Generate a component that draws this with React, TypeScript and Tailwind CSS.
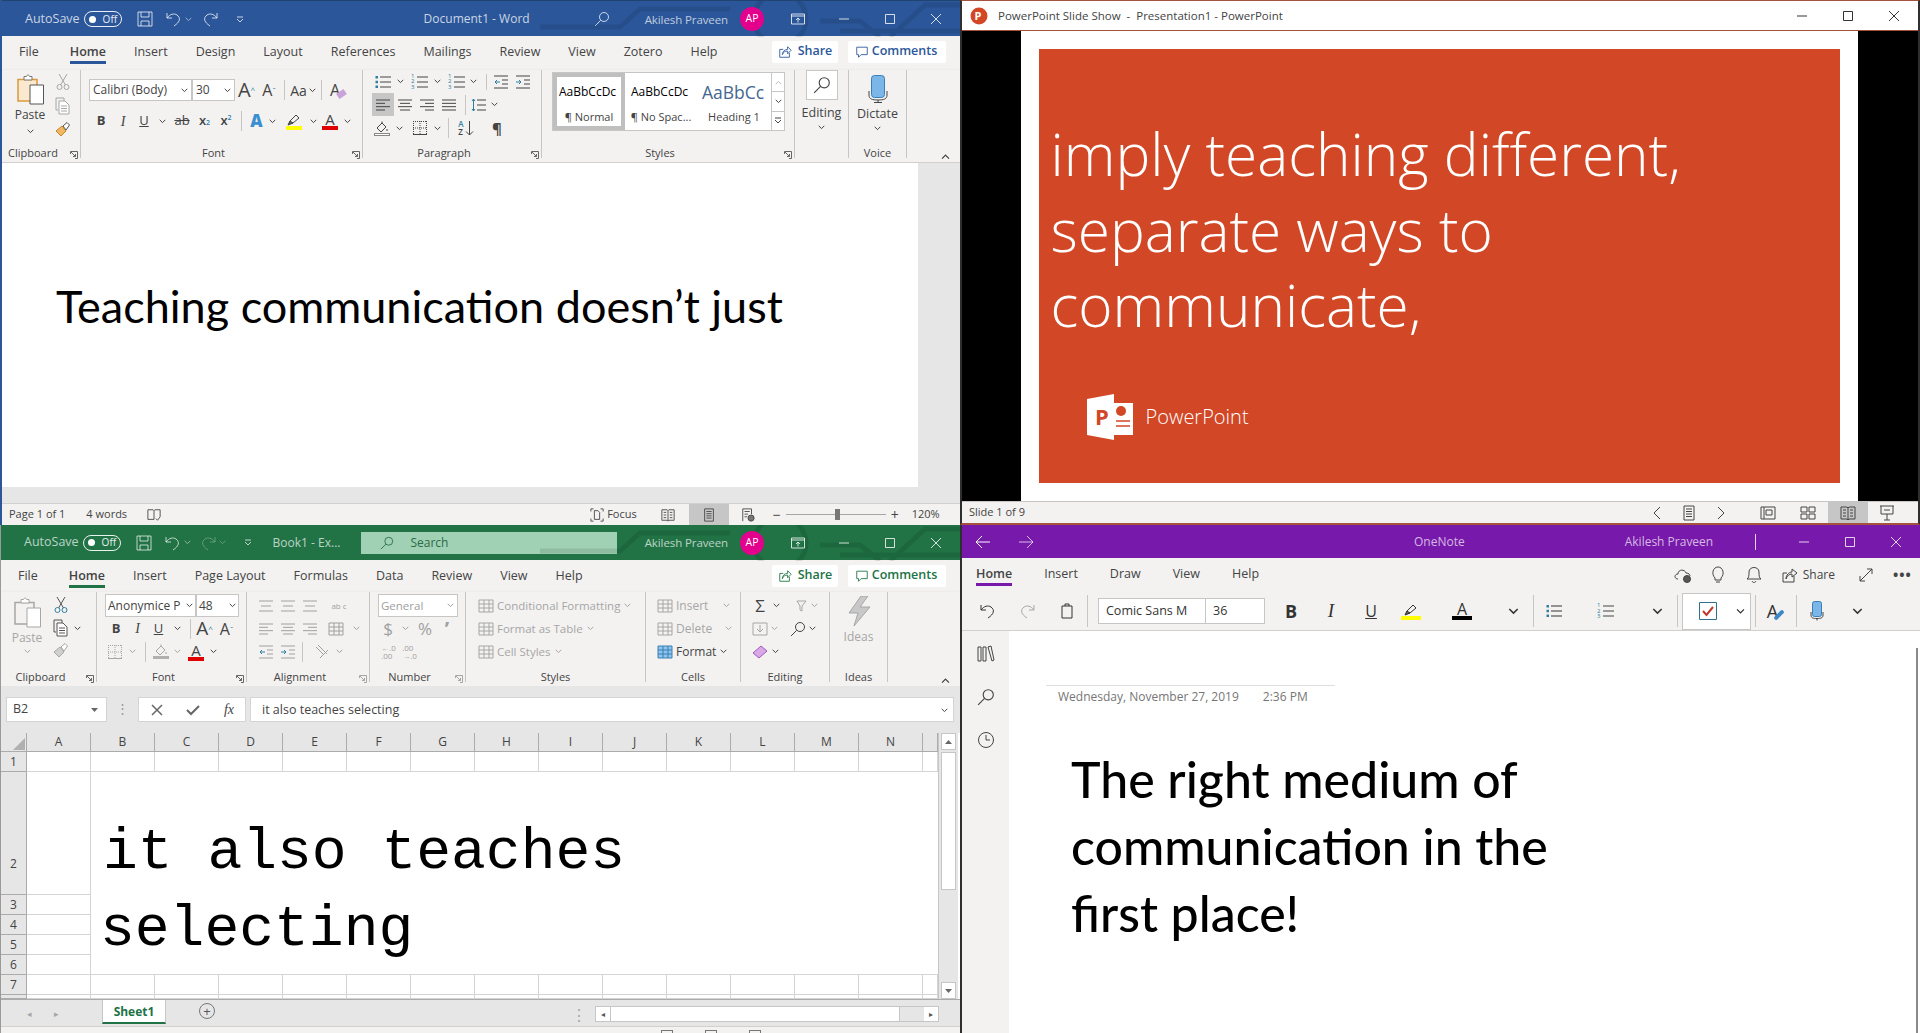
import type { ReactNode } from "react";

const ribbonText = "text-[#444444]";

function Ic({ w = 16, h = 16, vb = "0 0 16 16", c = "", children }: { w?: number; h?: number; vb?: string; c?: string; children: ReactNode }) {
  return (
    <svg width={w} height={h} viewBox={vb} fill="none" stroke="currentColor" strokeWidth="1" className={`shrink-0 ${c}`}>
      {children}
    </svg>
  );
}

function Chev({ c = "" }: { c?: string }) {
  return (
    <Ic w={7} h={5} vb="0 0 7 5" c={c}>
      <path d="M0.7 0.8 3.5 3.6 6.3 0.8" />
    </Ic>
  );
}

function Slot({ c, children }: { c: string; children?: ReactNode }) {
  return <div className={`flex shrink-0 items-center justify-center ${c}`}>{children}</div>;
}

function VSep({ c = "h-[20px]" }: { c?: string }) {
  return <div className={`w-px shrink-0 bg-[#c8c6c4] ${c}`} />;
}

function Lines({ rows, c = "" }: { rows: [number, number][]; c?: string }) {
  return (
    <Ic c={c}>
      {rows.map(([a, b], i) => (
        <path key={i} d={`M${a} ${3 + i * (10 / (rows.length - 1))}H${b}`} />
      ))}
    </Ic>
  );
}

const alignLeft: [number, number][] = [[1, 15], [1, 10], [1, 15], [1, 10]];
const alignCenter: [number, number][] = [[1, 15], [3, 13], [1, 15], [3, 13]];
const alignRight: [number, number][] = [[1, 15], [6, 15], [1, 15], [6, 15]];
const alignFull: [number, number][] = [[1, 15], [1, 15], [1, 15], [1, 15]];

function Bullets({ c = "" }: { c?: string }) {
  return (
    <Ic w={18} h={16} vb="0 0 18 16" c={c}>
      <path d="M6 3H17M6 8H17M6 13H17" />
      <path d="M1.5 2h2.5v2.5h-2.5zM1.5 6.8h2.5v2.5h-2.5zM1.5 11.6h2.5v2.5h-2.5z" fill="#2f7f9f" stroke="none" />
    </Ic>
  );
}

function Numbers({ c = "" }: { c?: string }) {
  return (
    <div className={`relative flex h-[16px] w-[18px] flex-col text-[6px] leading-[5.5px] text-[#2f7f9f] ${c}`}>
      <span>1</span>
      <span>2</span>
      <span>3</span>
      <svg width="18" height="16" viewBox="0 0 18 16" stroke="#444" className="absolute left-0 top-0" fill="none">
        <path d="M6 3H17M6 8H17M6 13H17" />
      </svg>
    </div>
  );
}

function Indent({ out }: { out?: boolean }) {
  return (
    <Ic>
      <path d="M1 2H15M9 6H15M9 10H15M1 14H15" />
      <path d={out ? "M7 8H2M4 6 2 8 4 10" : "M1 8H6M4 6 6 8 4 10"} stroke="#2f7f9f" />
    </Ic>
  );
}

function Paste({ off }: { off?: boolean }) {
  return (
    <svg width="29" height="33" viewBox="0 0 29 33" fill="none" className="shrink-0">
      <path d="M2 5.5H21V27H2Z" fill={off ? "#f3f2f1" : "#fbe9cf"} stroke={off ? "#a6a6a6" : "#d99a3c"} strokeWidth="1.5" />
      <path d="M8 6V2.5H10.5C11 0.5 13 0.5 13.5 2.5H16V6Z" fill="#fff" stroke={off ? "#a6a6a6" : "#777"} />
      <path d="M14 11H27.5V30H14Z" fill="#fff" stroke={off ? "#a6a6a6" : "#555"} />
    </svg>
  );
}

function Cut({ off, blue }: { off?: boolean; blue?: boolean }) {
  return (
    <Ic vb="0 0 16 18" h={18} c={off ? "text-[#a6a6a6]" : "text-[#555]"}>
      <path d="M4 1 10.5 12M12 1 5.5 12" />
      <circle cx="4.5" cy="14" r="2.5" stroke={blue ? "#2f7f9f" : "currentColor"} />
      <circle cx="11.5" cy="14" r="2.5" stroke={blue ? "#2f7f9f" : "currentColor"} />
    </Ic>
  );
}

function Copy({ off }: { off?: boolean }) {
  return (
    <Ic vb="0 0 16 18" h={18} c={off ? "text-[#a6a6a6]" : "text-[#555]"}>
      <path d="M3 13H1V1H9V4" />
      <path d="M4 4H10L14 8V17H4ZM6 9H12M6 11.5H12M6 14H12" fill="#fff" />
    </Ic>
  );
}

function Painter({ off }: { off?: boolean }) {
  return (
    <Ic vb="0 0 16 16" c={off ? "text-[#a6a6a6]" : "text-[#555]"}>
      <path d="M1 10 7 5 11 10 6 15Z" fill={off ? "#d0d0d0" : "#f3b661"} stroke={off ? "#a6a6a6" : "#c5852b"} />
      <path d="M8 5 12 1.5 14.5 4 11 9Z" fill="#fff" />
    </Ic>
  );
}

function ColorA({ bar, size = "text-[15px]", w = "w-[16px]" }: { bar: string; size?: string; w?: string }) {
  return (
    <div className={`flex flex-col items-center leading-[14px] ${size} ${w}`}>
      <span>A</span>
      <div className={`h-[4px] w-full ${bar}`} />
    </div>
  );
}

function Highlighter({ w = "w-[16px]" }: { w?: string }) {
  return (
    <div className={`flex flex-col items-center ${w}`}>
      <Ic w={14} h={13} vb="0 0 14 13">
        <path d="M2 11 3 8 9 2 12 5 6 10Z" />
        <path d="M1 12 3 8 6 10Z" fill="#666" />
      </Ic>
      <div className="h-[4px] w-full bg-[#ffff00]" />
    </div>
  );
}

function Borders({ off }: { off?: boolean }) {
  return (
    <Ic c={off ? "text-[#a6a6a6]" : "text-[#444]"}>
      <path d="M1 1.5H15M1 14.5H15M1.5 1V15M14.5 1V15M1 8H15M8 1V15" strokeDasharray="1 1" />
      <path d="M1 14.5H15" />
    </Ic>
  );
}

function Fill({ bar, off }: { bar: string; off?: boolean }) {
  return (
    <div className="flex w-[16px] flex-col items-center">
      <Ic w={14} h={12} vb="0 0 14 12" c={off ? "text-[#a6a6a6]" : "text-[#444]"}>
        <path d="M2 7 7 2 11 6 6 11Z" />
        <path d="M7 2V0.5M12 8V10" />
      </Ic>
      <div className={`h-[3px] w-full ${bar}`} />
    </div>
  );
}

function Launcher({ off }: { off?: boolean }) {
  return (
    <div className={`absolute bottom-[-1px] right-[2px] ${off ? "text-[#a6a6a6]" : "text-[#666]"}`}>
      <Ic w={8} h={8} vb="0 0 8 8">
        <path d="M0.5 3V0.5H7.5V7.5H5M1 1 5.5 5.5M3 5.5H5.5V3" />
      </Ic>
    </div>
  );
}

function Group({ label, w, launcher, off, children }: { label?: string; w: string; launcher?: boolean; off?: boolean; children: ReactNode }) {
  return (
    <div className={`relative flex h-full shrink-0 flex-col border-r border-[#c8c6c4] ${w}`}>
      <div className="min-h-0 flex-1">{children}</div>
      <div className={`h-[10px] text-center text-[11px] leading-[10px] ${launcher ? "pr-[16px]" : ""}`}>{label}</div>
      {launcher && <Launcher off={off} />}
    </div>
  );
}

function Tabs({ items, color, active = "Home", gap = "gap-[28px]", pad = "pl-[19px]" }: { items: string[]; color: string; active?: string; gap?: string; pad?: string }) {
  return (
    <div className={`flex ${gap} ${pad}`}>
      {items.map((t) => (
        <div key={t} className={`flex flex-col pt-[8px] ${t === active ? "font-semibold" : ""} ${t === "File" ? "mr-[3px]" : ""}`}>
          <span className="text-[12.5px] leading-[16px] text-[#444]">{t}</span>
          {t === active && <div className={`mt-[1px] h-[3px] ${color}`} />}
        </div>
      ))}
    </div>
  );
}

function ShareButtons({ color, pb }: { color: string; pb: string }) {
  return (
    <div className={`ml-auto flex items-center gap-[10px] pr-[14px] text-[12.5px] font-semibold ${pb} ${color}`}>
      <div className="flex h-[22px] w-[66px] items-center justify-center gap-[6px] rounded-[2px] bg-white">
        <Ic w={14} h={14} vb="0 0 16 16">
          <path d="M13 9V14H2V5H6M5 11C5 7 8 5 11 5V2L15 6 11 10V7C8 7 6 8 5 11Z" />
        </Ic>
        Share
      </div>
      <div className="flex h-[22px] w-[98px] items-center justify-center gap-[3px] rounded-[2px] bg-white pr-[2px]">
        <Ic w={14} h={14} vb="0 0 16 16">
          <path d="M2 2.5H14V11H7L4 14V11H2Z" />
        </Ic>
        Comments
      </div>
    </div>
  );
}

function WinButtons({ color = "text-white/80" }: { color?: string }) {
  return (
    <div className={`flex pr-px ${color}`}>
      <Slot c="w-[46px] h-[30px]">
        <Ic w={12} h={12} vb="0 0 12 12"><path d="M1 6H11" /></Ic>
      </Slot>
      <Slot c="w-[46px] h-[30px]">
        <Ic w={12} h={12} vb="0 0 12 12"><path d="M1.5 1.5H10.5V10.5H1.5Z" /></Ic>
      </Slot>
      <Slot c="w-[46px] h-[30px]">
        <Ic w={12} h={12} vb="0 0 12 12"><path d="M1 1 11 11M11 1 1 11" /></Ic>
      </Slot>
    </div>
  );
}

function Circuit() {
  return (
    <svg width="420" height="36" viewBox="0 0 420 36" fill="none" stroke="#000" strokeOpacity="0.1" strokeWidth="5" className="absolute right-0 top-0">
      <circle cx="240" cy="18" r="26" />
      <path d="M0 26H80L100 8H190M280 20H320L340 36M350 36 385 4H420M300 30H420" />
    </svg>
  );
}

function Toggle() {
  return (
    <div className="flex h-[16px] w-[38px] items-center rounded-full border border-white/90 pl-[4px] text-[10px] text-white/90">
      <div className="h-[7px] w-[7px] rounded-full bg-white" />
      <span className="ml-[7px]">Off</span>
    </div>
  );
}

function TitleRight() {
  return (
    <div className="ml-auto flex items-center">
      <span className="pt-px text-[11.5px] tracking-[-0.1px] text-white/70">Akilesh Praveen</span>
      <div className="ml-[12px] flex h-[24px] w-[24px] items-center justify-center rounded-full bg-[#e3008c] text-[10.5px] text-white">AP</div>
      <Slot c="ml-[11px] w-[46px] text-white/80">
        <Ic w={14} h={12} vb="0 0 14 12">
          <path d="M0.5 1H13.5V11H0.5ZM0.5 3H13.5M7 9.5V5M5 7 7 5 9 7" />
        </Ic>
      </Slot>
      <WinButtons />
    </div>
  );
}

function SaveIc() {
  return (
    <Ic>
      <path d="M1 1H15V15H1ZM4 1V6H12V1M4 15V10H12V15" />
    </Ic>
  );
}

function UndoIc({ c = "" }: { c?: string }) {
  return (
    <Ic c={c}>
      <path d="M1 2V7H6M1 7C4 3 8 2 11 4 15 7 14 11 8 15" />
    </Ic>
  );
}

function RedoIc({ c = "" }: { c?: string }) {
  return (
    <Ic c={c}>
      <path d="M15 2V7H10M15 7C12 3 8 2 5 4 1 7 2 11 8 15" />
    </Ic>
  );
}

function QuickIc() {
  return (
    <Ic w={8} h={7} vb="0 0 8 7">
      <path d="M1 1H7M1 3 4 6 7 3" />
    </Ic>
  );
}

function SearchIc({ w = 16, c = "" }: { w?: number; c?: string }) {
  return (
    <Ic w={w} h={w} c={c}>
      <circle cx="10" cy="6" r="4.5" />
      <path d="M6.7 9.3 1 15" />
    </Ic>
  );
}

function Word() {
  return (
    <div className="flex h-[525px] flex-col overflow-hidden border-l-2 border-[#2b579a]">
      <div className="relative flex h-[36px] shrink-0 items-center border-t border-[#20446f] bg-[#2b579a] pl-[23px] pt-px text-white/75">
        <Circuit />
        <span className="text-[12.5px]">AutoSave</span>
        <div className="ml-[4px]"><Toggle /></div>
        <div className="ml-[15px]"><SaveIc /></div>
        <div className="ml-[13px]"><UndoIc /></div>
        <Chev c="ml-[3px] opacity-70" />
        <div className="ml-[10px]"><RedoIc /></div>
        <div className="ml-[18px]"><QuickIc /></div>
        <span className="ml-[180px] text-[12px]">Document1  -  Word</span>
        <SearchIc c="ml-[64px]" />
        <div className="relative ml-auto"><TitleRight /></div>
      </div>
      <div className={`flex h-[34px] shrink-0 bg-[#f3f2f1] ${ribbonText}`}>
        <Tabs color="bg-[#2b579a]" pad="pl-[17px]" items={["File", "Home", "Insert", "Design", "Layout", "References", "Mailings", "Review", "View", "Zotero", "Help"]} />
        <ShareButtons color="text-[#2b579a]" pb="pb-[3px]" />
      </div>
      <div className={`flex h-[93px] shrink-0 border-b border-[#d2d0ce] bg-[#f3f2f1] pb-[4px] shadow-[0_1px_3px_rgba(0,0,0,0.15)] text-[11px] ${ribbonText}`}>
        <Group label="Clipboard" launcher w="w-[79px]">
          <div className="flex">
            <div className="flex w-[53px] flex-col items-center pl-[3px] pt-[4px]">
              <Paste />
              <span className="text-[12px] leading-[16px]">Paste</span>
              <Chev c="mt-[6px]" />
            </div>
            <div className="flex flex-col items-center gap-[6px] pt-[3px]">
              <Cut off />
              <Copy off />
              <Painter />
            </div>
          </div>
        </Group>
        <Group label="Font" launcher w="w-[282px]">
          <div className="flex items-center pl-[8px] pt-[8px]">
            <div className="flex h-[22px] w-[103px] items-center border border-[#c8c6c4] bg-white pl-[3px] pr-[3px] text-[12px]">
              Calibri (Body)
              <Chev c="ml-auto" />
            </div>
            <div className="flex h-[22px] w-[43px] items-center border border-[#c8c6c4] bg-white pl-[3px] pr-[3px] text-[12px]">
              30
              <Chev c="ml-auto" />
            </div>
            <Slot c="w-[23px] text-[20px] leading-none">A<span className="text-[8px] text-[#2f7f9f]">^</span></Slot>
            <Slot c="w-[22px] text-[16px] leading-none">A<span className="text-[8px] text-[#2f7f9f]">ˇ</span></Slot>
            <div className="ml-[4px]"><VSep /></div>
            <Slot c="w-[36px] gap-[2px] text-[14px]">Aa<Chev /></Slot>
            <VSep />
            <Slot c="w-[32px] text-[16px]">A<span className="ml-[-3px] mt-[8px] h-[6px] w-[9px] rotate-[-35deg] bg-[#c8a2d8]" /></Slot>
          </div>
          <div className="mt-[8px] flex h-[22px] items-center pl-[9px] text-[13px]">
            <Slot c="w-[22px] font-bold">B</Slot>
            <Slot c="w-[22px] italic font-['Liberation_Serif',serif] text-[14px]">I</Slot>
            <Slot c="w-[20px] underline">U</Slot>
            <Slot c="w-[16px]"><Chev /></Slot>
            <Slot c="w-[24px] line-through">ab</Slot>
            <Slot c="w-[21px] font-semibold">x<sub className="text-[7px] text-[#2f7f9f]">2</sub></Slot>
            <Slot c="w-[22px] font-semibold">x<sup className="text-[7px] text-[#2f7f9f]">2</sup></Slot>
            <div className="ml-[4px]"><VSep /></div>
            <Slot c="ml-[4px] w-[21px] text-[17px] font-extrabold text-[#3a8fd0]">A</Slot>
            <Slot c="w-[10px]"><Chev /></Slot>
            <Slot c="ml-[6px] w-[22px]"><Highlighter /></Slot>
            <Slot c="ml-[2px] w-[12px]"><Chev /></Slot>
            <Slot c="w-[22px]"><ColorA bar="bg-[#e00000]" /></Slot>
            <Slot c="w-[12px]"><Chev /></Slot>
          </div>
        </Group>
        <Group label="Paragraph" launcher w="w-[179px]">
          <div className="flex h-[23px] items-center pl-[11px]">
            <Bullets />
            <Chev c="ml-[5px]" />
            <Numbers c="ml-[7px]" />
            <Chev c="ml-[5px]" />
            <Numbers c="ml-[7px]" />
            <Chev c="ml-[4px]" />
            <div className="ml-[9px]"><VSep c="h-[16px]" /></div>
            <div className="ml-[6px]"><Indent out /></div>
            <div className="ml-[6px]"><Indent /></div>
          </div>
          <div className="flex h-[23px] items-center pl-[9px]">
            <Slot c="h-[23px] w-[22px] bg-[#c6c6c6]"><Lines rows={alignLeft} /></Slot>
            <Slot c="w-[22px]"><Lines rows={alignCenter} /></Slot>
            <Slot c="w-[22px]"><Lines rows={alignRight} /></Slot>
            <Slot c="w-[22px]"><Lines rows={alignFull} /></Slot>
            <div className="ml-[5px]"><VSep /></div>
            <Slot c="ml-[5px] w-[16px]">
              <Ic>
                <path d="M6 3H15M6 8H15M6 13H15" />
                <path d="M2.5 2V14M1 4 2.5 2 4 4M1 12 2.5 14 4 12" stroke="#2f7f9f" />
              </Ic>
            </Slot>
            <Chev c="ml-[4px]" />
          </div>
          <div className="flex h-[23px] items-center pl-[11px] pt-px">
            <Fill bar="bg-[#ffffff] border border-[#888]" />
            <Chev c="ml-[6px]" />
            <div className="ml-[9px]"><Borders /></div>
            <Chev c="ml-[6px]" />
            <div className="ml-[7px]"><VSep /></div>
            <Slot c="ml-[6px] w-[22px] gap-px">
              <div className="flex flex-col text-[8px] font-semibold leading-[8px]"><span className="text-[#2f7f9f]">A</span><span>Z</span></div>
              <Ic w={9} h={16} vb="0 0 9 16"><path d="M4.5 1V15M1 11.5 4.5 15 8 11.5" /></Ic>
            </Slot>
            <Slot c="ml-[12px] w-[16px] text-[15px] font-bold">¶</Slot>
          </div>
        </Group>
        <Group label="Styles" launcher w="w-[253px]">
          <div className="ml-[10px] mt-[2px] flex h-[59px] w-[233px] border border-[#c8c6c4] bg-white">
            <div className="flex w-[72px] flex-col items-center justify-center border-[4px] border-[#bfbfbf] text-black">
              <span className="h-[28px] w-[60px] overflow-hidden whitespace-nowrap text-[12px] leading-[28px]">AaBbCcDc</span>
              <span className="pt-[2px] text-[11px] leading-[18px] text-[#444]">¶ Normal</span>
            </div>
            <div className="flex w-[72px] flex-col items-center justify-center text-black">
              <span className="h-[28px] w-[60px] overflow-hidden whitespace-nowrap text-[12px] leading-[28px]">AaBbCcDc</span>
              <span className="pt-[2px] text-[11px] leading-[18px] text-[#444]">¶ No Spac...</span>
            </div>
            <div className="flex w-[74px] flex-col items-center justify-center">
              <span className="h-[28px] w-[64px] whitespace-nowrap text-[17.5px] leading-[28px] text-[#44688f]">AaBbCc</span>
              <span className="pt-[2px] text-[11px] leading-[18px] text-[#444]">Heading 1</span>
            </div>
            <div className="flex flex-1 flex-col border-l border-[#c8c6c4]">
              <Slot c="flex-1 border-b border-[#c8c6c4] text-[#bbb]"><Chev c="rotate-180" /></Slot>
              <Slot c="flex-1 border-b border-[#c8c6c4]"><Chev /></Slot>
              <Slot c="flex-1"><QuickIc /></Slot>
            </div>
          </div>
        </Group>
        <Group w="w-[54px]">
          <div className="flex flex-col items-center">
            <Slot c="h-[30px] w-[32px] border border-[#c8c6c4] bg-white"><SearchIc w={18} /></Slot>
            <span className="mt-[5px] text-[12.5px] leading-[16px]">Editing</span>
            <Chev c="mt-[4px]" />
          </div>
        </Group>
        <Group label="Voice" w="w-[58px]">
          <div className="flex flex-col items-center pt-[5px]">
            <svg width="20" height="28" viewBox="0 0 20 28" fill="none" stroke="#444">
              <rect x="3.5" y="0.5" width="13" height="22" rx="3" fill="#7ab7e8" stroke="#3a7fb8" />
              <path d="M1 16V20C1 24 4 25 10 25 16 25 19 24 19 20V16M10 25V27.5M6 27.5H14" />
            </svg>
            <span className="mt-[3px] text-[12.5px] leading-[16px]">Dictate</span>
            <Chev c="mt-[4px]" />
          </div>
        </Group>
        <div className="relative flex-1">
          <Chev c="absolute bottom-[-1px] right-[11px] rotate-180 scale-125" />
        </div>
      </div>
      <div className="flex min-h-0 flex-1 bg-[#e6e6e6]">
        <div className="mb-[16px] w-[916px] bg-white pl-[54px] pt-[109px]">
          <p className="font-['Lato',sans-serif] text-[45px] leading-[69px] text-black">Teaching communication doesn’t just</p>
        </div>
      </div>
      <div className="flex h-[22px] shrink-0 items-center border-t border-[#d2d0ce] bg-[#f3f2f1] pl-[7px] text-[11px] text-[#444]">
        <span>Page 1 of 1</span>
        <span className="ml-[21px]">4 words</span>
        <Ic w={14} h={14} c="ml-[20px]">
          <path d="M1 2H7L8 3 9 2H15V10M8 3V13M1 2V13H8M10 12 12 14 15 10" />
        </Ic>
        <Ic w={14} h={14} c="ml-[429px]">
          <path d="M1 4V1H4M12 1H15V4M15 12V15H12M4 15H1V12M5 3H9L11 5V13H5Z" />
        </Ic>
        <span className="ml-[3px]">Focus</span>
        <Ic w={14} h={14} c="ml-[24px]">
          <path d="M1 2H7L8 3 9 2H15V14H9L8 15 7 14H1ZM8 3V15M3 5H6M3 8H6M3 11H6M10 5H13M10 8H13M10 11H13" />
        </Ic>
        <Slot c="ml-[14px] h-[21px] w-[40px] bg-[#c6c6c6]">
          <Ic w={14} h={14}>
            <path d="M3 1H13V15H3ZM5 4H11M5 6.5H11M5 9H11M5 11.5H11" />
          </Ic>
        </Slot>
        <Ic w={14} h={14} c="ml-[12px]">
          <path d="M2 15V1H12V7M4 4H10M4 7H8M4 10H7" />
          <circle cx="11.5" cy="11.5" r="3.5" fill="#777" />
        </Ic>
        <span className="ml-[18px] text-[14px] leading-none">−</span>
        <div className="relative ml-[5px] h-px w-[100px] bg-[#a6a6a6]">
          <div className="absolute left-[49px] top-[-5px] h-[11px] w-[5px] bg-[#777]" />
        </div>
        <span className="ml-[5px] text-[14px] leading-none">+</span>
        <span className="ml-[13px]">120%</span>
      </div>
    </div>
  );
}

function StyleItem({ label, off, icon, tail }: { label: string; off?: boolean; icon: ReactNode; tail?: string }) {
  return (
    <div className={`flex h-[23px] items-center gap-[3px] ${off ? "text-[#a6a6a6]" : ""}`}>
      {icon}
      <span className="whitespace-nowrap">{label}</span>
      <Chev c={tail ?? "ml-[1px]"} />
    </div>
  );
}

function TableIc({ c = "", fill = "none" }: { c?: string; fill?: string }) {
  return (
    <Ic c={c}>
      <path d="M1 2H15V14H1ZM1 6H15M1 10H15M6 2V14M11 2V14" fill={fill} />
    </Ic>
  );
}

const cols = ["A", "B", "C", "D", "E", "F", "G", "H", "I", "J", "K", "L", "M", "N"];
const line = "border-r border-b border-[#d4d4d4]";
const headCell = "flex items-center justify-center border-r border-b border-[#ababab] bg-[#e6e6e6] text-[12px] text-[#444]";

function Sheet() {
  const fullRows = [
    { n: "1", row: "row-start-2" },
    { n: "7", row: "row-start-8" },
    { n: "8", row: "row-start-9" },
  ];
  return (
    <div className="grid w-[937px] shrink-0 grid-cols-[26px_repeat(14,64px)_15px] grid-rows-[19px_20px_123px_20px_20px_20px_20px_20px_4px] bg-white">
      <div className={`${headCell} items-end justify-end pb-px pr-px`}>
        <svg width="12" height="12" viewBox="0 0 12 12"><path d="M12 0V12H0Z" fill="#b0b0b0" /></svg>
      </div>
      {cols.map((c) => (
        <div key={c} className={headCell}>{c}</div>
      ))}
      <div className={headCell} />
      {fullRows.map((r) => (
        <div key={r.n} className="contents">
          <div className={`${headCell} col-start-1 ${r.row}`}>{r.n === "8" ? "" : r.n}</div>
          {[...cols, ""].map((c) => (
            <div key={c} className={`${line} ${r.row}`} />
          ))}
        </div>
      ))}
      <div className="col-start-1 row-start-3 flex items-end justify-center border-r border-b border-[#ababab] bg-[#e6e6e6] pb-[21px] text-[12px] text-[#444]">2</div>
      <div className={`${headCell} col-start-1 row-start-4`}>3</div>
      <div className={`${headCell} col-start-1 row-start-5`}>4</div>
      <div className={`${headCell} col-start-1 row-start-6`}>5</div>
      <div className={`${headCell} col-start-1 row-start-7`}>6</div>
      <div className={`${line} col-start-2 row-start-3`} />
      <div className={`${line} col-start-2 row-start-4`} />
      <div className={`${line} col-start-2 row-start-5`} />
      <div className={`${line} col-start-2 row-start-6`} />
      <div className={`${line} col-start-2 row-start-7`} />
      <div className="col-span-15 col-start-3 row-span-5 row-start-3 overflow-hidden border-b border-[#d4d4d4] pl-[12px] pt-[42px] font-['Liberation_Mono',monospace] text-[58px] leading-[77px] text-black">
        <div>it also teaches</div>
        <div className="ml-[-3px]">selecting</div>
      </div>
    </div>
  );
}

function Excel() {
  return (
    <div className="flex h-[508px] flex-col overflow-hidden border-l border-[#9a9a9a]">
      <div className="relative flex h-[35px] shrink-0 items-center bg-[#217346] pl-[23px] text-white/70">
        <Circuit />
        <span className="text-[12.5px]">AutoSave</span>
        <div className="ml-[4px]"><Toggle /></div>
        <div className="ml-[15px]"><SaveIc /></div>
        <div className="ml-[13px]"><UndoIc /></div>
        <Chev c="ml-[3px] opacity-70" />
        <div className="ml-[9px] opacity-40"><RedoIc /></div>
        <Chev c="ml-[3px] opacity-40" />
        <div className="ml-[18px]"><QuickIc /></div>
        <span className="ml-[21px] text-[12px]">Book1  -  Ex...</span>
        <div className="ml-[21px] flex h-[22px] w-[256px] items-center bg-[#a0d1b4] pl-[19px] text-[#2c6a48]">
          <SearchIc w={14} />
          <span className="ml-[16px] text-[12px]">Search</span>
        </div>
        <div className="relative ml-auto"><TitleRight /></div>
      </div>
      <div className={`flex h-[32px] shrink-0 bg-[#f3f2f1] ${ribbonText}`}>
        <Tabs color="bg-[#217346]" pad="pl-[17px]" items={["File", "Home", "Insert", "Page Layout", "Formulas", "Data", "Review", "View", "Help"]} />
        <ShareButtons color="text-[#217346]" pb="pb-[1px]" />
      </div>
      <div className={`flex h-[94px] shrink-0 bg-[#f3f2f1] pb-[4px] text-[11px] shadow-[0_2px_4px_rgba(0,0,0,0.2)] ${ribbonText}`}>
        <Group label="Clipboard" launcher w="w-[96px]">
          <div className="flex">
            <div className="flex w-[52px] flex-col items-center pt-[5px] text-[#a6a6a6]">
              <Paste off />
              <span className="text-[12px] leading-[16px]">Paste</span>
              <Chev c="mt-[3px]" />
            </div>
            <div className="flex flex-col gap-[5px] pt-[4px]">
              <Cut blue />
              <div className="flex items-center gap-[5px]"><Copy /><Chev /></div>
              <Painter off />
            </div>
          </div>
        </Group>
        <Group label="Font" launcher w="w-[150px]">
          <div className="flex pl-[8px] pt-[2px]">
            <div className="flex h-[23px] w-[91px] items-center border border-[#c8c6c4] bg-white pl-[2px] pr-[2px] text-[12px]">
              <span className="whitespace-nowrap">Anonymice P</span>
              <Chev c="ml-auto" />
            </div>
            <div className="flex h-[23px] w-[43px] items-center border border-[#c8c6c4] bg-white pl-[2px] pr-[2px] text-[12px]">
              48
              <Chev c="ml-auto" />
            </div>
          </div>
          <div className="flex h-[23px] items-center pl-[8px] text-[13px]">
            <Slot c="w-[22px] font-bold">B</Slot>
            <Slot c="w-[21px] italic font-['Liberation_Serif',serif] text-[14px]">I</Slot>
            <Slot c="w-[21px] underline">U</Slot>
            <Slot c="w-[16px]"><Chev /></Slot>
            <div className="ml-[5px]"><VSep /></div>
            <Slot c="ml-[3px] w-[21px] text-[19px]">A<span className="text-[8px] text-[#2f7f9f]">^</span></Slot>
            <Slot c="w-[23px] text-[16px]">A<span className="text-[8px] text-[#2f7f9f]">ˇ</span></Slot>
          </div>
          <div className="flex h-[23px] items-center pl-[10px]">
            <Borders off />
            <Chev c="ml-[6px] text-[#a6a6a6]" />
            <div className="ml-[9px]"><VSep /></div>
            <div className="ml-[7px]"><Fill bar="bg-[#b0b0b0]" off /></div>
            <Chev c="ml-[5px] text-[#a6a6a6]" />
            <Slot c="ml-[7px] w-[16px]"><ColorA bar="bg-[#e00000]" /></Slot>
            <Chev c="ml-[6px]" />
          </div>
        </Group>
        <Group label="Alignment" launcher off w="w-[123px]">
          <div className="pl-[11px] pt-[2px] text-[#a0a0a0]">
            <div className="flex h-[23px] items-center gap-[6px]">
              <Lines rows={[[1, 15], [3, 13], [1, 15]]} />
              <Lines rows={[[1, 15], [3, 13], [1, 15]]} />
              <Lines rows={[[1, 15], [3, 13], [1, 15]]} />
              <div className="ml-[6px] w-[18px] text-center text-[8px] leading-[10px]">ab c</div>
            </div>
            <div className="flex h-[23px] items-center gap-[6px]">
              <Lines rows={alignLeft} />
              <Lines rows={alignCenter} />
              <Lines rows={alignRight} />
              <TableIc c="ml-[4px]" />
              <Chev c="ml-[3px]" />
            </div>
            <div className="flex h-[23px] items-center gap-[6px]">
              <Indent out />
              <Indent />
              <VSep />
              <Ic c="ml-[5px]"><path d="M2 3 10 11M4 1 13 10M6 14 14 6" /></Ic>
              <Chev />
            </div>
          </div>
        </Group>
        <Group label="Number" launcher off w="w-[96px]">
          <div className="pl-[8px] pt-[2px] text-[#a0a0a0]">
            <div className="flex h-[23px] w-[80px] items-center border border-[#c8c6c4] bg-white pl-[2px] pr-[3px] text-[11.5px]">
              General
              <Chev c="ml-auto" />
            </div>
            <div className="flex h-[23px] items-center pl-[2px]">
              <Slot c="w-[16px] text-[17px]">$</Slot>
              <Chev c="ml-[6px]" />
              <Slot c="ml-[6px] w-[20px] text-[17px]">%</Slot>
              <Slot c="ml-[4px] w-[16px] text-[20px] font-bold leading-[20px]">’</Slot>
            </div>
            <div className="flex h-[23px] items-center gap-[4px] pl-[2px] text-[8px] leading-[8px]">
              <Slot c="w-[17px]">←.0<br />.00</Slot>
              <Slot c="w-[17px]">.00<br />→.0</Slot>
            </div>
          </div>
        </Group>
        <Group label="Styles" w="w-[180px]">
          <div className="pl-[12px] pt-[2px] text-[11.5px]">
            <StyleItem off label="Conditional Formatting" icon={<TableIc />} />
            <StyleItem off label="Format as Table" icon={<TableIc />} />
            <StyleItem off label="Cell Styles" icon={<TableIc />} />
          </div>
        </Group>
        <Group label="Cells" w="w-[95px]">
          <div className="pl-[11px] pt-[2px] text-[12px]">
            <StyleItem off label="Insert" tail="ml-[12px]" icon={<TableIc />} />
            <StyleItem off label="Delete" tail="ml-[10px]" icon={<TableIc />} />
            <StyleItem label="Format" icon={<TableIc c="text-[#3c7fb0]" fill="#8cc4ee" />} />
          </div>
        </Group>
        <Group label="Editing" w="w-[89px]">
          <div className="pl-[11px] pt-[2px]">
            <div className="flex h-[23px] items-center">
              <Slot c="w-[16px] text-[17px]">Σ</Slot>
              <Chev c="ml-[5px]" />
              <Slot c="ml-[9px] w-[20px] text-[#a6a6a6]">
                <Ic><path d="M6 3H15L11 8V13L9 12V8Z" /></Ic>
              </Slot>
              <Chev c="ml-[2px] text-[#a6a6a6]" />
            </div>
            <div className="flex h-[23px] items-center">
              <Slot c="w-[16px] text-[#a6a6a6]">
                <Ic><path d="M1 2H15V14H1ZM8 4V11M5 8 8 11 11 8" /></Ic>
              </Slot>
              <Chev c="ml-[3px] text-[#a6a6a6]" />
              <SearchIc c="ml-[12px]" />
              <Chev c="ml-[3px]" />
            </div>
            <div className="flex h-[23px] items-center">
              <Ic><path d="M1 9 9 2 15 7 7 14Z" fill="#d9a8e6" stroke="#a259b8" /></Ic>
              <Chev c="ml-[4px]" />
            </div>
          </div>
        </Group>
        <Group label="Ideas" w="w-[58px]">
          <div className="flex flex-col items-center pt-[4px] text-[#a6a6a6]">
            <svg width="24" height="30" viewBox="0 0 24 30"><path d="M14 0 2 17H11L7 30 23 11H13L21 0Z" fill="#c8c8c8" stroke="#a6a6a6" /></svg>
            <span className="mt-[3px] text-[12px] leading-[16px]">Ideas</span>
          </div>
        </Group>
        <div className="relative flex-1">
          <Chev c="absolute bottom-[-1px] right-[11px] rotate-180 scale-125" />
        </div>
      </div>
      <div className="flex h-[47px] shrink-0 items-start gap-[4px] bg-[#e6e6e6] pl-[5px] pr-[6px] pt-[11px] text-[12.5px] text-[#444]">
        <div className="flex h-[25px] w-[101px] items-center justify-between border border-[#d4d4d4] bg-white pl-[6px] pr-[8px]">
          B2
          <svg width="7" height="4" viewBox="0 0 7 4"><path d="M0 0H7L3.5 4Z" fill="#666" /></svg>
        </div>
        <Slot c="h-[25px] w-[23px] text-[#999] tracking-tighter">⋮</Slot>
        <div className="flex h-[25px] w-[108px] items-center border border-[#d4d4d4] bg-white">
          <Slot c="w-[36px] text-[#666]"><Ic w={12} h={12} vb="0 0 12 12"><path d="M1 1 11 11M11 1 1 11" strokeWidth="1.5" /></Ic></Slot>
          <Slot c="w-[36px] text-[#666]"><Ic w={14} h={12} vb="0 0 14 12"><path d="M1 6 5 10 13 2" strokeWidth="2" /></Ic></Slot>
          <Slot c="w-[36px] font-['Liberation_Serif',serif] text-[14px] italic">fx</Slot>
        </div>
        <div className="flex h-[25px] flex-1 items-center border border-[#d4d4d4] bg-white pl-[11px] pr-[5px] pt-px">
          it also teaches selecting
          <Chev c="ml-auto" />
        </div>
      </div>
      <div className="flex min-h-0 flex-1 flex-col">
        <div className="flex h-[266px] shrink-0">
          <Sheet />
          <div className="flex w-[20px] flex-col border-l border-[#c8c6c4] bg-[#e6e6e6] px-[2px] text-[#666]">
            <Slot c="h-[17px] border border-[#c8c6c4] bg-white">
              <svg width="7" height="4" viewBox="0 0 7 4"><path d="M0 4H7L3.5 0Z" fill="currentColor" /></svg>
            </Slot>
            <div className="mt-[2px] h-[138px] border border-[#c8c6c4] bg-white" />
            <div className="flex-1" />
            <Slot c="h-[17px] border border-[#c8c6c4] bg-white">
              <svg width="7" height="4" viewBox="0 0 7 4"><path d="M0 0H7L3.5 4Z" fill="currentColor" /></svg>
            </Slot>
          </div>
        </div>
        <div className="flex h-[28px] shrink-0 items-start border-y border-[#ababab] border-b-[#d2d0ce] bg-[#e6e6e6] text-[#a6a6a6]">
          <span className="ml-[26px] mt-[7px] text-[9px]">◂</span>
          <span className="ml-[22px] mt-[7px] text-[9px]">▸</span>
          <div className="ml-[43px] flex h-[24px] w-[64px] items-center justify-center border-x border-b-2 border-[#c8c6c4] border-b-[#217346] bg-white pt-[2px] text-[12px] font-bold text-[#217346]">Sheet1</div>
          <Slot c="ml-[33px] mt-[3px] h-[16px] w-[16px] rounded-full border border-[#777] text-[13px] leading-none text-[#555]">+</Slot>
          <span className="ml-[356px] mt-[3px] text-[#aaa]">⋮</span>
          <div className="ml-[8px] mt-[6px] flex h-[16px] w-[344px] items-center border border-[#c8c6c4] bg-[#e6e6e6] text-[#555]">
            <Slot c="h-full w-[14px] bg-white text-[8px]">◂</Slot>
            <div className="h-full w-[290px] border-x border-[#c8c6c4] bg-white" />
            <div className="flex-1" />
            <Slot c="h-full w-[14px] bg-white text-[8px]">▸</Slot>
          </div>
        </div>
        <div className="flex flex-1 items-end gap-[32px] bg-[#f3f2f1] pl-[660px] text-[#777]">
          <div className="h-[3px] w-[12px] border-x border-t border-current" />
          <div className="h-[3px] w-[12px] border-x border-t border-current" />
          <div className="h-[3px] w-[12px] border-x border-t border-current" />
        </div>
      </div>
    </div>
  );
}

function PPLogo() {
  return (
    <svg width="46" height="46" viewBox="0 0 46 46" className="shrink-0">
      <path d="M27 9H46V41H27Z" fill="#fff" />
      <path d="M0 5 27 0V46L0 41Z" fill="#fff" />
      <circle cx="34" cy="17" r="5" fill="#d24726" />
      <path d="M29 27H43M29 32H43" stroke="#d24726" strokeWidth="1.5" />
      <text x="8" y="31" fontSize="22" fontWeight="700" fontFamily="Open Sans" fill="#d24726">P</text>
    </svg>
  );
}

function PowerPoint() {
  return (
    <div className="flex h-[525px] flex-col overflow-hidden border-x-2 border-b-2 border-t border-x-[#2f2f2f] border-b-[#a5513f] border-t-[#a5513f]">
      <div className="flex h-[30px] shrink-0 items-center border-b border-[#a5513f] bg-white pl-[8px] text-[#444]">
        <svg width="18" height="18" viewBox="0 0 18 18" className="shrink-0">
          <circle cx="9" cy="9" r="8.5" fill="#d24726" />
          <text x="4.5" y="13" fontSize="11" fontWeight="700" fontFamily="Open Sans" fill="#fff">P</text>
        </svg>
        <span className="ml-[10px] whitespace-pre text-[11.5px]">PowerPoint Slide Show  -  Presentation1 - PowerPoint</span>
        <div className="ml-auto"><WinButtons color="text-[#333]" /></div>
      </div>
      <div className="flex min-h-0 flex-1 justify-center bg-black pr-[2px]">
        <div className="w-[837px] bg-white px-[18px] py-[18px]">
          <div className="flex h-full flex-col bg-[#d24726] pl-[12px] pt-[67px] font-['Open_Sans',sans-serif] text-white">
            <p className="text-[58.5px] font-light leading-[75.5px]">imply teaching different,<br />separate ways to<br />communicate,</p>
            <div className="ml-[36px] mt-[51px] flex items-center gap-[13px]">
              <PPLogo />
              <span className="text-[20px] font-light">PowerPoint</span>
            </div>
          </div>
        </div>
      </div>
      <div className="flex h-[22px] shrink-0 items-center border-t border-[#c8c6c4] bg-[#f3f2f1] pl-[7px] text-[11px] text-[#444]">
        <span>Slide 1 of 9</span>
        <div className="ml-auto flex items-center pr-[23px]">
          <Ic w={10} h={16} vb="0 0 10 14"><path d="M8 1 2 7 8 13" /></Ic>
          <Ic c="ml-[19px]"><path d="M3 1H13V15H3ZM5 4H11M5 6.5H11M5 9H11M5 11.5H11" /></Ic>
          <Ic w={10} h={16} vb="0 0 10 14" c="ml-[19px]"><path d="M2 1 8 7 2 13" /></Ic>
          <Ic c="ml-[34px]"><path d="M1 2H15V14H1ZM4 2V14M6 5H12V10H6Z" /></Ic>
          <Ic c="ml-[24px]"><path d="M1 2H7V7H1ZM9 2H15V7H9ZM1 9H7V14H1ZM9 9H15V14H9Z" /></Ic>
          <Slot c="ml-[12px] h-[21px] w-[40px] bg-[#c6c6c6]">
            <Ic><path d="M1 2H7L8 3 9 2H15V14H9L8 15 7 14H1ZM8 3V15M3 5H6M3 8H6M3 11H6M10 5H13M10 8H13M10 11H13" /></Ic>
          </Slot>
          <Ic c="ml-[11px]"><path d="M1 1H15M2 1V9H14V1M8 9V15M5 15H11M5 5H11" /></Ic>
        </div>
      </div>
    </div>
  );
}

function OneNote() {
  return (
    <div className="flex h-[508px] flex-col overflow-hidden border-l-2 border-[#2f2f2f]">
      <div className="flex h-[33px] shrink-0 items-center bg-[#7719aa] pt-px text-[12px] text-white/70">
        <Ic c="ml-[13px] text-white"><path d="M15 8H1M7 2 1 8 7 14" /></Ic>
        <Ic c="ml-[27px]"><path d="M1 8H15M9 2 15 8 9 14" /></Ic>
        <span className="ml-[380px]">OneNote</span>
        <span className="ml-[160px]">Akilesh Praveen</span>
        <div className="ml-[42px] h-[16px] w-px bg-white/80" />
        <div className="ml-auto"><WinButtons /></div>
      </div>
      <div className="flex h-[34px] shrink-0 bg-[#f3f2f1]">
        <Tabs color="bg-[#7719aa]" pad="pl-[14px]" gap="gap-[32px]" items={["Home", "Insert", "Draw", "View", "Help"]} />
        <div className="ml-auto flex items-center pr-[9px] text-[12px] text-[#444]">
          <Ic w={18} h={16} vb="0 0 18 16"><path d="M4 12C0 12 0 7 4 7 4 2 11 2 12 6 15 6 16 8 16 9" /><circle cx="13" cy="12" r="3.5" fill="#555" /></Ic>
          <Ic w={14} h={18} vb="0 0 14 18" c="ml-[19px]"><path d="M4 12C0 8 2 1 7 1 12 1 14 8 10 12V14H4ZM5 16H9" /></Ic>
          <Ic w={16} h={18} vb="0 0 16 18" c="ml-[21px]"><path d="M1 13C3 12 3 9 3 6 3 0 13 0 13 6 13 9 13 12 15 13ZM6 15C7 17 9 17 10 15" /></Ic>
          <Ic c="ml-[20px]"><path d="M12 9V15H1V6H5M4 12C4 8 7 5 10 5V2L15 6 10 10V7C7 7 5 9 4 12Z" /></Ic>
          <span className="ml-[5px]">Share</span>
          <Ic c="ml-[23px]"><path d="M2 14 14 2M9 2H14V7M2 9V14H7" /></Ic>
          <span className="ml-[19px] w-[18px] text-[14px] font-bold leading-none tracking-[1px]">•••</span>
        </div>
      </div>
      <div className="flex h-[39px] shrink-0 items-center border-b border-[#d2d0ce] bg-[#f3f2f1] text-[#333] shadow-[0_1px_2px_rgba(0,0,0,0.1)]">
        <Slot c="ml-[6px] w-[40px]"><UndoIc /></Slot>
        <Slot c="w-[38px] text-[#a6a6a6]"><RedoIc /></Slot>
        <Slot c="w-[41px]"><Ic><path d="M3 3H13V15H3ZM6 3V1H10V3" /></Ic></Slot>
        <VSep c="h-[32px]" />
        <div className="ml-[10px] flex h-[26px] w-[167px] items-center border border-[#c8c6c4] bg-white text-[12.5px]">
          <span className="w-[107px] border-r border-[#c8c6c4] pl-[7px] leading-[24px]">Comic Sans M</span>
          <span className="pl-[7px]">36</span>
        </div>
        <Slot c="ml-[6px] w-[40px] text-[18px] font-bold">B</Slot>
        <Slot c="w-[40px] font-['Liberation_Serif',serif] text-[19px] italic">I</Slot>
        <Slot c="w-[40px] text-[16px] underline">U</Slot>
        <Slot c="w-[40px]"><Highlighter w="w-[20px]" /></Slot>
        <Slot c="ml-[11px] w-[40px]"><ColorA bar="bg-black" w="w-[20px]" size="text-[16px]" /></Slot>
        <Slot c="ml-[11px] w-[40px]"><Chev c="scale-150" /></Slot>
        <VSep c="h-[32px]" />
        <Slot c="w-[40px]"><Bullets /></Slot>
        <Slot c="ml-[12px] w-[40px]"><Numbers /></Slot>
        <Slot c="ml-[11px] w-[40px]"><Chev c="scale-150" /></Slot>
        <VSep c="h-[32px]" />
        <div className="ml-[4px] flex h-[37px] w-[69px] items-center border border-[#c8c6c4] bg-white pl-[16px]">
          <svg width="18" height="18" viewBox="0 0 18 18" fill="none">
            <path d="M0.5 0.5H17.5V17.5H0.5Z" stroke="#2f6f8f" />
            <path d="M4 9 7.5 13 14 5" stroke="#c0392b" strokeWidth="2" />
          </svg>
          <Chev c="ml-[20px] scale-125" />
        </div>
        <div className="ml-[4px]"><VSep c="h-[32px]" /></div>
        <Slot c="w-[40px] text-[18px] leading-none">
          A
          <span className="ml-[-5px] mt-[8px] h-[4px] w-[12px] rotate-[-45deg] rounded-full bg-[#3f87c5]" />
        </Slot>
        <VSep c="h-[32px]" />
        <Slot c="w-[39px]">
          <svg width="14" height="20" viewBox="0 0 14 20" fill="none" stroke="#444">
            <rect x="2.5" y="0.5" width="9" height="15" rx="2" fill="#7ab7e8" stroke="#3a7fb8" />
            <path d="M1 11V14C1 17 3 17.5 7 17.5 11 17.5 13 17 13 14V11M7 17.5V19.5" />
          </svg>
        </Slot>
        <Slot c="ml-[1px] w-[40px]"><Chev c="scale-150" /></Slot>
      </div>
      <div className="flex min-h-0 flex-1">
        <div className="flex w-[47px] shrink-0 flex-col items-center gap-[25px] bg-[#f3f2f1] pt-[14px] text-[#444]">
          <Ic w={18} h={18} vb="0 0 18 18"><path d="M1 2H4V16H1ZM6 2H9V16H6ZM11 2 14 1 17 15 15 16Z" /></Ic>
          <SearchIc w={18} />
          <Ic w={18} h={18} vb="0 0 18 18"><circle cx="9" cy="9" r="7.5" /><path d="M9 4V9H13" /></Ic>
        </div>
        <div className="relative flex-1 bg-white pl-[37px] pt-[54px]">
          <div className="w-[289px] border-t border-[#e1dfdd] pl-[12px] pt-[2px] text-[12px] leading-[18px] text-[#767676]">
            <span>Wednesday, November 27, 2019</span>
            <span className="ml-[24px]">2:36 PM</span>
          </div>
          <p className="ml-[25px] mt-[40px] font-['Lato',sans-serif] text-[50px] font-medium leading-[67px] text-black">
            The right medium of<br />communication in the<br />first place!
          </p>
          <div className="absolute right-[2px] top-[17px] h-[400px] w-[2px] bg-[#8a8a8a]" />
        </div>
      </div>
    </div>
  );
}

export default function App() {
  return (
    <div className="grid h-[1033px] w-[1920px] grid-cols-[960px_960px] grid-rows-[525px_508px] overflow-hidden bg-white font-['Open_Sans',sans-serif]">
      <Word />
      <PowerPoint />
      <Excel />
      <OneNote />
    </div>
  );
}
